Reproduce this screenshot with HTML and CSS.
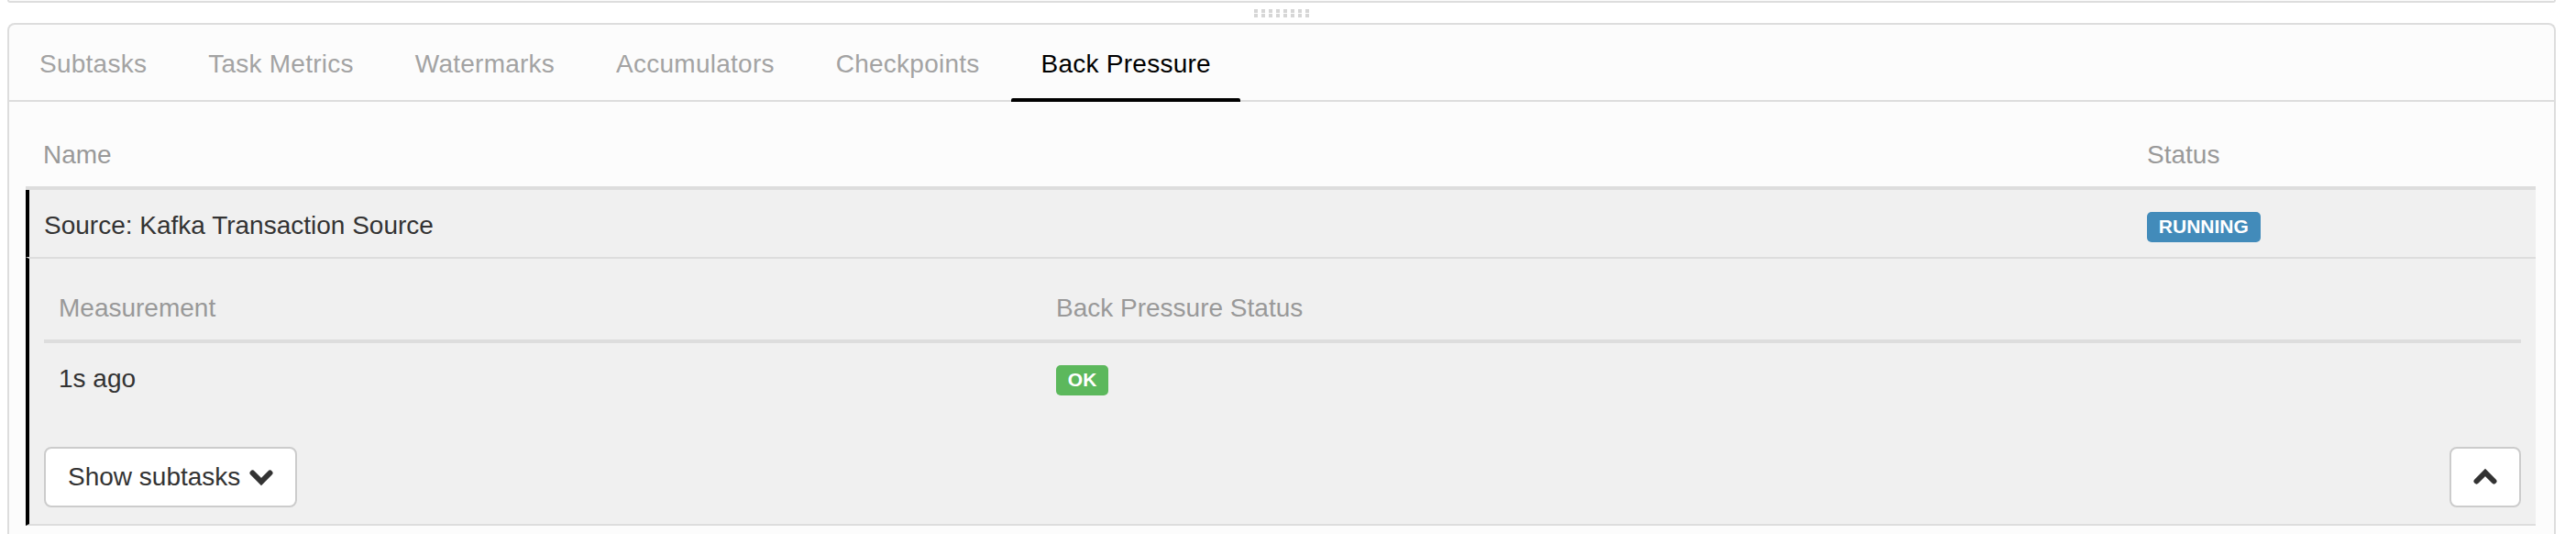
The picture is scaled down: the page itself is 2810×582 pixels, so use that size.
FILE: index.html
```html
<!DOCTYPE html>
<html lang="en">
<head>
<meta charset="utf-8">
<title>Back Pressure</title>
<link rel="stylesheet" href="styles.css">
</head>
<body>
<div class="page">
  <div class="prev-panel"></div>
  <div class="resizer">
    <div class="grip">
      <span></span><span></span><span></span><span></span><span></span><span></span><span></span><span></span>
      <span></span><span></span><span></span><span></span><span></span><span></span><span></span><span></span>
    </div>
  </div>
  <section class="panel">
    <nav class="tabs">
      <a class="tab">Subtasks</a>
      <a class="tab">Task Metrics</a>
      <a class="tab">Watermarks</a>
      <a class="tab">Accumulators</a>
      <a class="tab">Checkpoints</a>
      <a class="tab active">Back Pressure</a>
    </nav>
    <div class="panel-body">
      <table class="table main-table">
        <thead>
          <tr>
            <th class="col-name">Name</th>
            <th class="col-status">Status</th>
          </tr>
        </thead>
        <tbody>
          <tr class="op-row">
            <td class="op-name">Source: Kafka Transaction Source</td>
            <td class="op-status"><span class="label label-running">RUNNING</span></td>
          </tr>
          <tr class="detail-row">
            <td colspan="2" class="detail-cell">
              <table class="table sub-table">
                <thead>
                  <tr>
                    <th class="col-measure">Measurement</th>
                    <th>Back Pressure Status</th>
                  </tr>
                </thead>
                <tbody>
                  <tr>
                    <td>1s ago</td>
                    <td><span class="label label-ok">OK</span></td>
                  </tr>
                </tbody>
              </table>
              <div class="btn-row">
                <button class="btn">Show subtasks
                  <svg class="chev" width="26" height="18" viewBox="0 0 26 18"><path d="M3.5 4.5L13 14L22.5 4.5" fill="none" stroke="#333" stroke-width="6" stroke-linecap="round" stroke-linejoin="miter"/></svg>
                </button>
                <button class="btn btn-icon">
                  <svg class="chev" width="26" height="18" viewBox="0 0 26 18"><path d="M3.5 13.5L13 4L22.5 13.5" fill="none" stroke="#333" stroke-width="6" stroke-linecap="round" stroke-linejoin="miter"/></svg>
                </button>
              </div>
            </td>
          </tr>
        </tbody>
      </table>
    </div>
  </section>
</div>
</body>
</html>
```

FILE: styles.css
```css
html, body {
  margin: 0;
  padding: 0;
  background: #fff;
}

body {
  font-family: "Liberation Sans", Arial, Helvetica, sans-serif;
  font-size: 28px;
  color: #333;
  overflow: hidden;
}

.page {
  padding: 0 22px 0 8px;
}

.prev-panel {
  height: 1px;
  border: 2px solid #ddd;
  border-top: none;
  border-radius: 0 0 6px 6px;
  background: #fcfcfc;
}

.resizer {
  height: 22px;
  display: flex;
  align-items: center;
  justify-content: center;
}

.grip {
  display: grid;
  grid-template-columns: repeat(8, 4px);
  grid-auto-rows: 4px;
  gap: 1px 4px;
}

.grip span {
  background: #d6d6d6;
}

.panel {
  border: 2px solid #ddd;
  border-bottom: none;
  border-radius: 8px 8px 0 0;
  background: #fcfcfc;
  min-height: 600px;
}

.tabs {
  display: flex;
  gap: 2px;
  height: 82px;
  border-bottom: 2px solid #ddd;
}

.tab {
  position: relative;
  display: flex;
  align-items: center;
  padding: 4px 32px 0 33px;
  letter-spacing: 0.25px;
  color: #a3a3a3;
  cursor: pointer;
}

.tab.active {
  color: #000;
}

.tab.active::after {
  content: "";
  position: absolute;
  left: 0;
  right: 0;
  bottom: -2px;
  height: 4px;
  background: #000;
  border-radius: 2px 2px 0 0;
}

.panel-body {
  padding: 20px 20px 0 18px;
}

.table {
  width: 100%;
  border-collapse: separate;
  border-spacing: 0;
}

.table th {
  text-align: left;
  font-weight: normal;
  color: #999;
  padding: 18px 16px 14px;
  line-height: 40px;
  border-bottom: 4px solid #ddd;
}

.table td {
  padding: 19px 16px 13px;
  line-height: 40px;
  color: #333;
}

.main-table .col-name {
  padding-left: 19px;
}

.main-table .col-status {
  width: 408px;
}

.op-row td {
  background: #f0f0f0;
  padding-bottom: 14px;
}

.op-row .op-name {
  border-left: 4px solid #000;
}

.detail-row .detail-cell {
  background: #f0f0f0;
  border-left: 4px solid #000;
  border-top: 2px solid #ddd;
  border-bottom: 2px solid #ddd;
  padding: 16px 16px 18px 16px;
}

.sub-table {
  margin-bottom: 41px;
}

.sub-table .col-measure {
  width: 1056px;
}

.label {
  display: inline-block;
  font-size: 21px;
  font-weight: bold;
  line-height: 1;
  color: #fff;
  padding: 5px 12.8px 6.5px;
  border-radius: 5px;
  vertical-align: 1px;
}

.label-running {
  background: #428bba;
}

.label-ok {
  background: #5cb85c;
}

.btn-row {
  display: flex;
  justify-content: space-between;
  align-items: center;
}

.btn {
  display: inline-flex;
  align-items: center;
  gap: 10px;
  font-family: inherit;
  font-size: 28px;
  line-height: 40px;
  color: #333;
  background: #fff;
  border: 2px solid #ccc;
  border-radius: 8px;
  padding: 11px 24px;
  margin: 0;
  cursor: pointer;
}

.btn-icon {
  gap: 0;
}

.chev {
  display: block;
  height: 40px;
}
```
